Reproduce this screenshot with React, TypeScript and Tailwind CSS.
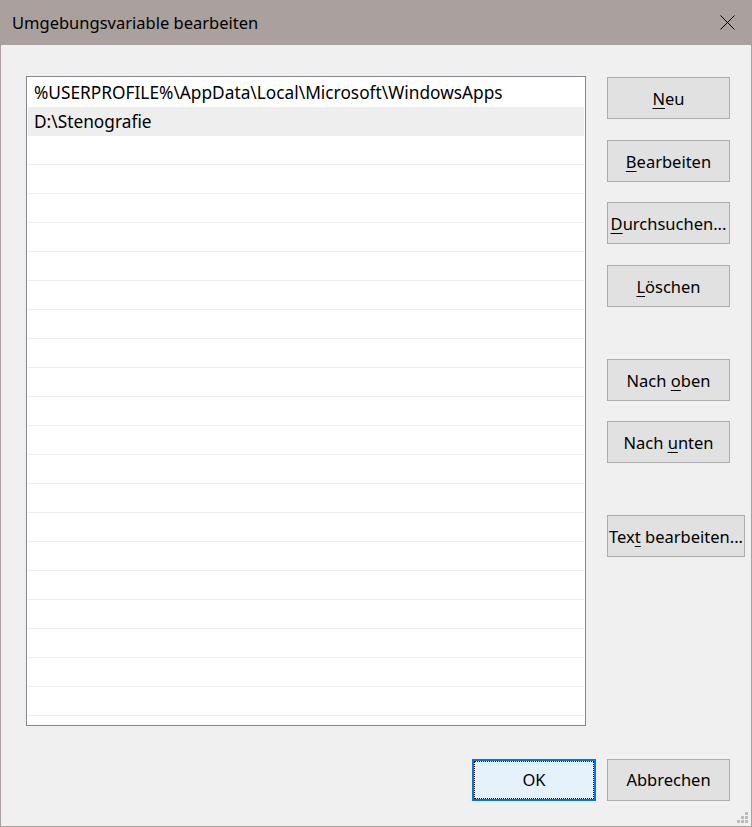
import React from 'react';

const font = { fontFamily: '"Noto Sans", "Liberation Sans", sans-serif' };

interface Btn {
    pre?: string;
    key_: string;
    post: string;
    mt: string;
    w?: string;
}

const sideButtons: Btn[] = [
    { key_: 'N', post: 'eu', mt: 'mt-[1px]' },
    { key_: 'B', post: 'earbeiten', mt: 'mt-[21px]' },
    { key_: 'D', post: 'urchsuchen...', mt: 'mt-[20px]' },
    { key_: 'L', post: 'öschen', mt: 'mt-[21px]' },
    { pre: 'Nach ', key_: 'o', post: 'ben', mt: 'mt-[52px]' },
    { pre: 'Nach ', key_: 'u', post: 'nten', mt: 'mt-[20px]' },
    { pre: 'Tex', key_: 't', post: ' bearbeiten...', mt: 'mt-[52px]', w: 'w-[138px]' },
];

const rows = ['%USERPROFILE%\\AppData\\Local\\Microsoft\\WindowsApps', 'D:\\Stenografie'];

function WinButton({ b }: { b: Btn }) {
    return (
        <button
            className={`${b.mt} ${b.w ?? 'w-[123px]'} h-[42px] bg-[#e1e1e1] border border-[#adadad] text-[16.5px] text-black text-center whitespace-pre px-0 pt-[2px]`}
        >
            <span>
                {b.pre}
                <span className="underline underline-offset-[3px] decoration-1">{b.key_}</span>
                {b.post}
            </span>
        </button>
    );
}

export default function App() {
    const lines = Array.from({ length: 23 }, (_, i) => rows[i] ?? '');
    return (
        <div
            className="w-[752px] h-[827px] bg-[#f0f0f0] border border-t-0 border-[#aaa19e] flex flex-col relative"
            style={font}
        >
            <div className="h-[45px] -mx-[1px] bg-[#aaa19e] flex items-center justify-between pl-[12px] pr-[17px] shrink-0">
                <span className="text-[16.5px] text-black pt-[1px]">Umgebungsvariable bearbeiten</span>
                <svg width="15" height="15" viewBox="0 0 15 15" className="mb-[1px]">
                    <path d="M0.5 0.5 L14.5 14.5 M14.5 0.5 L0.5 14.5" stroke="#000" strokeWidth="1" />
                </svg>
            </div>

            <div className="flex pl-[25px] pt-[31px]">
                <div className="w-[560px] h-[650px] bg-white border border-[#828790] pt-[1px] overflow-hidden">
                    {lines.map((t, i) => (
                        <div
                            key={i}
                            className={`h-[29px] mx-[1px] flex items-center pl-[6px] pt-[2px] text-[17.3px] text-black whitespace-nowrap border-b ${
                                i === 1 ? 'bg-[#eeeeee] border-[#eeeeee]' : i === 0 ? 'border-white' : 'border-[#efefef]'
                            }`}
                        >
                            {t}
                        </div>
                    ))}
                </div>
                <div className="flex flex-col ml-[21px]">
                    {sideButtons.map((b, i) => (
                        <WinButton key={i} b={b} />
                    ))}
                </div>
            </div>

            <div className="flex justify-end gap-[11px] pr-[21px] mt-[33px]">
                <button className="w-[124px] h-[42px] bg-[#e5f1fb] border-2 border-[#0078d7] relative text-[16.5px] text-black">
                    <span className="absolute inset-0 border border-dotted border-black" />
                    OK
                </button>
                <button className="w-[123px] h-[42px] bg-[#e1e1e1] border border-[#adadad] text-[16.5px] text-black">
                    Abbrechen
                </button>
            </div>

            <svg width="12" height="12" viewBox="0 0 12 12" className="absolute right-[2px] bottom-[2px]">
                <rect x="8" y="0" width="3" height="3" fill="#bcbcbc" />
                <rect x="4" y="4" width="3" height="3" fill="#bcbcbc" />
                <rect x="8" y="4" width="3" height="3" fill="#bcbcbc" />
                <rect x="0" y="8" width="3" height="3" fill="#bcbcbc" />
                <rect x="4" y="8" width="3" height="3" fill="#bcbcbc" />
                <rect x="8" y="8" width="3" height="3" fill="#bcbcbc" />
            </svg>
        </div>
    );
}
